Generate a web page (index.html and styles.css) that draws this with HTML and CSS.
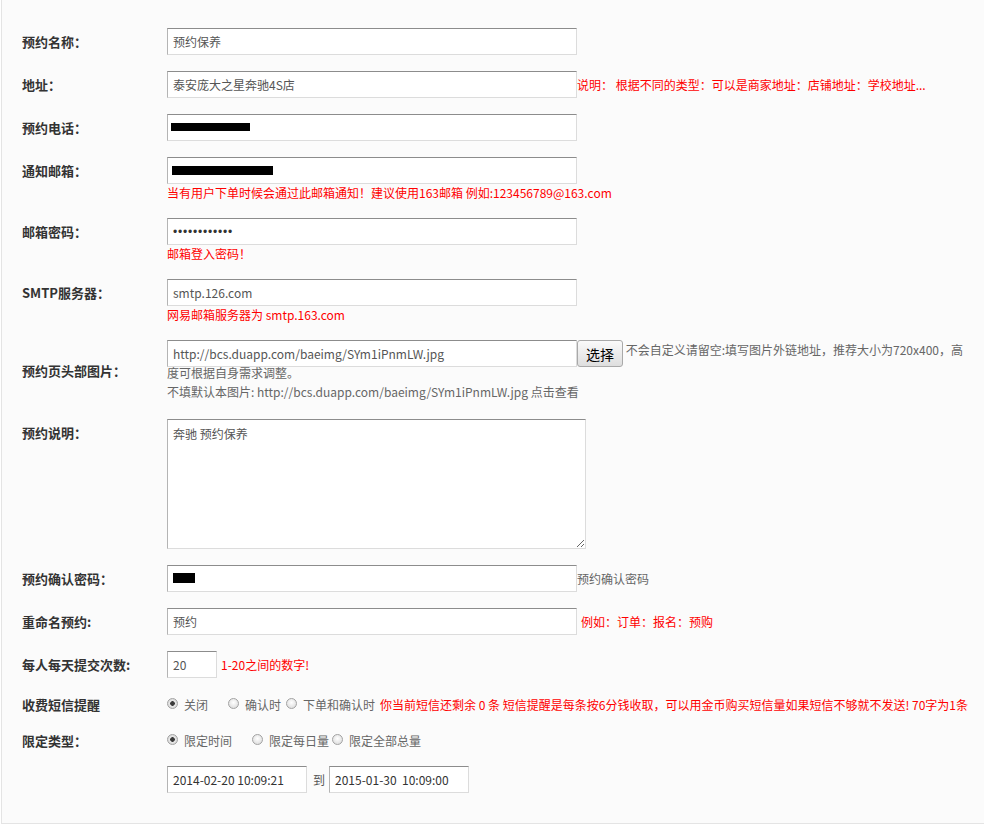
FILE: index.html
```html
<!doctype html>
<html lang="zh-CN">
  <head>
    <meta charset="UTF-8" />
    <title>预约设置</title>
    <link rel="stylesheet" href="styles.css">
  </head>
  <body>
    <form class="panel">
      <!-- 基本信息 -->
      <div class="row">
        <label class="label">预约名称：</label>
        <div class="field">
          <input class="txt" type="text" value="预约保养" />
        </div>
      </div>

      <div class="row">
        <label class="label">地址：</label>
        <div class="field line">
          <input class="txt" type="text" value="泰安庞大之星奔驰4S店" />
          <span class="note red">说明： 根据不同的类型：可以是商家地址：店铺地址：学校地址...</span>
        </div>
      </div>

      <div class="row">
        <label class="label">预约电话：</label>
        <div class="field">
          <span class="mask-wrap">
            <input class="txt" type="text" value="" />
            <span class="mask mask-phone"></span>
          </span>
        </div>
      </div>

      <div class="row">
        <label class="label">通知邮箱：</label>
        <div class="field">
          <span class="mask-wrap">
            <input class="txt" type="text" value="" />
            <span class="mask mask-mail"></span>
          </span>
          <div class="hint red">当有用户下单时候会通过此邮箱通知！建议使用163邮箱 例如:123456789@163.com</div>
        </div>
      </div>

      <div class="row">
        <label class="label">邮箱密码：</label>
        <div class="field">
          <input class="txt pwd" type="text" value="••••••••••••" />
          <div class="hint red">邮箱登入密码！</div>
        </div>
      </div>

      <div class="row">
        <label class="label">SMTP服务器：</label>
        <div class="field">
          <input class="txt" type="text" value="smtp.126.com" />
          <div class="hint red">网易邮箱服务器为 smtp.163.com</div>
        </div>
      </div>

      <!-- 图片 -->
      <div class="row row-mid">
        <label class="label">预约页头部图片：</label>
        <div class="field flow">
          <input class="txt" type="text" value="http://bcs.duapp.com/baeimg/SYm1iPnmLW.jpg" /><button class="btn" type="button">选择</button>
          不会自定义请留空:填写图片外链地址，推荐大小为720x400，高度可根据自身需求调整。
          <div>不填默认本图片: http://bcs.duapp.com/baeimg/SYm1iPnmLW.jpg 点击查看</div>
        </div>
      </div>

      <div class="row">
        <label class="label">预约说明：</label>
        <div class="field">
          <textarea class="area">奔驰 预约保养</textarea>
        </div>
      </div>

      <div class="row">
        <label class="label">预约确认密码：</label>
        <div class="field line">
          <span class="mask-wrap">
            <input class="txt" type="text" value="" />
            <span class="mask mask-code"></span>
          </span>
          <span class="note">预约确认密码</span>
        </div>
      </div>

      <div class="row">
        <label class="label">重命名预约:</label>
        <div class="field line">
          <input class="txt" type="text" value="预约" />
          <span class="note red gap">例如：订单：报名：预购</span>
        </div>
      </div>

      <div class="row">
        <label class="label">每人每天提交次数:</label>
        <div class="field line">
          <input class="txt small" type="text" value="20" />
          <span class="note red gap">1-20之间的数字!</span>
        </div>
      </div>

      <!-- 短信 / 限定 -->
      <div class="row row-radio">
        <label class="label">收费短信提醒</label>
        <div class="field options nowrap">
          <label class="opt wide"><input type="radio" name="sms" checked />关闭</label>
          <label class="opt"><input type="radio" name="sms" />确认时</label>
          <label class="opt"><input type="radio" name="sms" />下单和确认时</label>
          <span class="red">你当前短信还剩余 0 条 短信提醒是每条按6分钱收取，可以用金币购买短信量如果短信不够就不发送! 70字为1条</span>
        </div>
      </div>

      <div class="row row-radio">
        <label class="label">限定类型：</label>
        <div class="field options">
          <label class="opt wide"><input type="radio" name="limit" checked />限定时间</label>
          <label class="opt tight"><input type="radio" name="limit" />限定每日量</label>
          <label class="opt"><input type="radio" name="limit" />限定全部总量</label>
        </div>
      </div>

      <div class="row last">
        <span class="label"></span>
        <div class="field line">
          <input class="txt date" type="text" value="2014-02-20 10:09:21" />
          <span class="to">到</span>
          <input class="txt date" type="text" value="2015-01-30  10:09:00" />
        </div>
      </div>
    </form>
  </body>
</html>
```

FILE: styles.css
```css
/* Base */
html,
body {
  margin: 0;
  background: #ffffff;
  overflow: hidden;
}

body {
  font-family: "Noto Sans CJK SC", "Microsoft YaHei", sans-serif;
  font-size: 12px;
  color: #333;
}

/* Form panel */
.panel {
  margin: 0 0 0 1px;
  padding: 28px 0 30px 20px;
  background: #fbfbfb;
  border-left: 1px solid #e4e4e4;
  border-bottom: 1px solid #e4e4e4;
}

.row {
  display: flex;
  align-items: flex-start;
  margin-bottom: 16px;
}

.row.last {
  margin-bottom: 0;
}

.row-mid {
  margin-bottom: 18px;
}

.row-mid .label {
  align-self: center;
}

.row-radio {
  margin-bottom: 15px;
}

.label {
  flex: none;
  width: 145px;
  font-size: 13px;
  font-weight: bold;
  line-height: 27px;
  color: #333;
}

.row-radio .label {
  line-height: 21px;
}

.field {
  flex: 1;
  line-height: 18px;
  color: #666;
}

.line {
  display: flex;
  align-items: center;
}

.flow {
  flex: none;
  width: 800px;
  line-height: 19px;
}

.flow .txt,
.flow .btn {
  vertical-align: middle;
  margin-bottom: -4px;
}

.nowrap {
  white-space: nowrap;
}

/* Inputs */
.txt {
  box-sizing: border-box;
  width: 410px;
  height: 27px;
  margin: 0;
  padding: 0 5px;
  border: 1px solid #dcdcdc;
  border-top-color: #8c8c8c;
  border-left-color: #b4b4b4;
  background: #fff;
  font-family: inherit;
  font-size: 12px;
  color: #555;
  outline: none;
}

.txt.pwd {
  font-family: "Liberation Sans", Arial, sans-serif;
  letter-spacing: 0.8px;
  color: #333;
}

.txt.small {
  width: 50px;
}

.txt.date {
  width: 140px;
  color: #333;
}

.area {
  display: block;
  box-sizing: border-box;
  width: 419px;
  height: 130px;
  margin: 0;
  padding: 5px;
  border: 1px solid #dcdcdc;
  border-top-color: #8c8c8c;
  border-left-color: #b4b4b4;
  background: #fff;
  font-family: inherit;
  font-size: 12px;
  line-height: 18px;
  color: #555;
  outline: none;
}

.btn {
  box-sizing: border-box;
  height: 27px;
  width: 46px;
  margin: 0;
  padding: 0;
  border: 1px solid #a9a9a9;
  border-radius: 3px;
  background: linear-gradient(#fafafa, #dedede);
  font-family: inherit;
  font-size: 14px;
  color: #000;
}

/* Texts next to fields */
.red {
  color: #ff0000;
}

.note.gap {
  margin-left: 4px;
}

.hint {
  line-height: 18px;
}

.to {
  margin: 0 4px 0 6px;
  color: #555;
}

/* Hidden personal data */
.mask-wrap {
  position: relative;
  display: inline-block;
  vertical-align: top;
}

.mask {
  position: absolute;
  background: #000;
}

.mask-phone {
  left: 4px;
  top: 9px;
  width: 79px;
  height: 8px;
}

.mask-mail {
  left: 5px;
  top: 9px;
  width: 101px;
  height: 9px;
}

.mask-code {
  left: 6px;
  top: 8px;
  width: 22px;
  height: 10px;
}

/* Radio options */
.options {
  display: flex;
  align-items: center;
  height: 21px;
  color: #666;
}

.opt {
  display: inline-flex;
  align-items: center;
  margin-right: 5px;
}

.opt.wide {
  margin-right: 20px;
}

.opt.tight {
  margin-right: 3px;
}

.opt input {
  appearance: none;
  -webkit-appearance: none;
  box-sizing: border-box;
  width: 11px;
  height: 11px;
  margin: 0 6px 3px 0;
  border: 1px solid #a2a2a2;
  border-radius: 50%;
  background: radial-gradient(circle at 50% 40%, #ffffff, #d6d6d6);
}

.opt input:checked {
  background: radial-gradient(circle, #3c3c3c 0 2px, #e8e8e8 2.6px, #d0d0d0 100%);
}
```
